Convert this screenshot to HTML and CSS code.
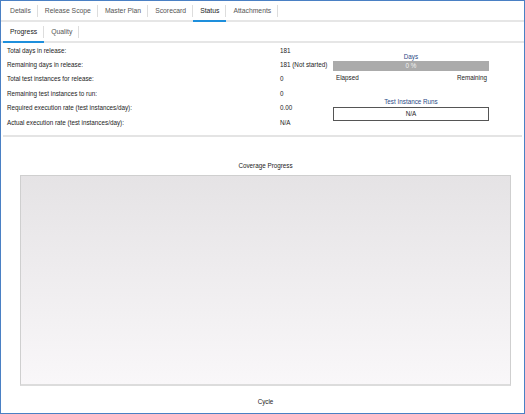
FILE: index.html
```html
<!DOCTYPE html>
<html lang="en">
<head>
    <meta charset="UTF-8">
    <title>Release Status</title>
    <link rel="stylesheet" href="styles.css">
</head>
<body>
    <div class="frame">
        <!-- Main tabs -->
        <div class="tabs">
            <div class="tab">Details</div>
            <div class="tab">Release Scope</div>
            <div class="tab">Master Plan</div>
            <div class="tab">Scorecard</div>
            <div class="tab active">Status</div>
            <div class="tab">Attachments</div>
        </div>

        <!-- Sub tabs -->
        <div class="tabs sub-tabs">
            <div class="tab active">Progress</div>
            <div class="tab">Quality</div>
        </div>

        <div class="summary">
            <div class="stats">
                <div class="stat-row"><span class="label">Total days in release:</span><span class="value">181</span></div>
                <div class="stat-row"><span class="label">Remaining days in release:</span><span class="value">181 (Not started)</span></div>
                <div class="stat-row"><span class="label">Total test instances for release:</span><span class="value">0</span></div>
                <div class="stat-row"><span class="label">Remaining test instances to run:</span><span class="value">0</span></div>
                <div class="stat-row"><span class="label">Required execution rate (test instances/day):</span><span class="value">0.00</span></div>
                <div class="stat-row"><span class="label">Actual execution rate (test instances/day):</span><span class="value">N/A</span></div>
            </div>

            <div class="gauges">
                <div class="gauge-title">Days</div>
                <div class="days-bar">0 %</div>
                <div class="bar-legend">
                    <span>Elapsed</span>
                    <span>Remaining</span>
                </div>
                <div class="gauge-title runs-title">Test Instance Runs</div>
                <div class="runs-box">N/A</div>
            </div>
        </div>

        <div class="coverage">
            <div class="chart-title">Coverage Progress</div>
            <div class="chart-area"></div>
            <div class="axis-title">Cycle</div>
        </div>
    </div>
</body>
</html>
```

FILE: styles.css
```css
/* Base */
body {
    margin: 0;
    font-family: 'Liberation Sans', Arial, sans-serif;
    font-size: 6.3px;
    color: #222;
    background: #fff;
}

.frame {
    width: 525px;
    height: 414px;
    box-sizing: border-box;
    border: 1px solid #4a80c4;
    display: flex;
    flex-direction: column;
}

/* Tabs */
.tabs {
    display: flex;
    height: 19px;
    padding-left: 2px;
    border-bottom: 2px solid #e6e6e6;
    color: #555;
    font-size: 6.8px;
}

.tab {
    display: flex;
    align-items: center;
    padding: 0 7px;
    position: relative;
    border-bottom: 2px solid transparent;
    margin-bottom: -2px;
}

.tab::after {
    content: '';
    position: absolute;
    right: 0;
    top: 4px;
    bottom: 3px;
    border-right: 1px solid #ddd;
}

.tab.active {
    color: #222;
    border-bottom-color: #1e8fdc;
}

/* Summary */
.summary {
    display: flex;
    height: 92px;
    margin: 0 2px;
    border-bottom: 2px solid #e4e4e4;
}

.stats {
    width: 326px;
    padding: 0 0 0 4px;
}

.stat-row {
    display: flex;
    height: 14.4px;
    align-items: center;
}

.label {
    width: 273px;
}

.gauges {
    width: 156px;
    padding-top: 9px;
    display: flex;
    flex-direction: column;
}

.gauge-title {
    text-align: center;
    color: #2c4a86;
    height: 9px;
    line-height: 9px;
}

.days-bar {
    height: 10px;
    line-height: 10px;
    background: #ababab;
    color: #f2f2f2;
    text-align: center;
}

.bar-legend {
    display: flex;
    justify-content: space-between;
    padding: 3px 2px 0 3px;
}

.runs-title {
    margin-top: 16px;
}

.runs-box {
    height: 12px;
    line-height: 12px;
    border: 1px solid #555;
    text-align: center;
    margin-top: 1px;
}

/* Coverage chart */
.coverage {
    flex: 1;
    display: flex;
    flex-direction: column;
    padding: 0 13px 0 19px;
}

.chart-title {
    text-align: center;
    margin-top: 25px;
    height: 13px;
}

.chart-area {
    height: 208px;
    border: 1px solid #cfcfcf;
    border-bottom: 2px solid #dcdcdc;
    background: linear-gradient(to bottom, #e5e3e5, #f9f7f9);
}

.axis-title {
    text-align: center;
    margin-top: 12px;
}
```
